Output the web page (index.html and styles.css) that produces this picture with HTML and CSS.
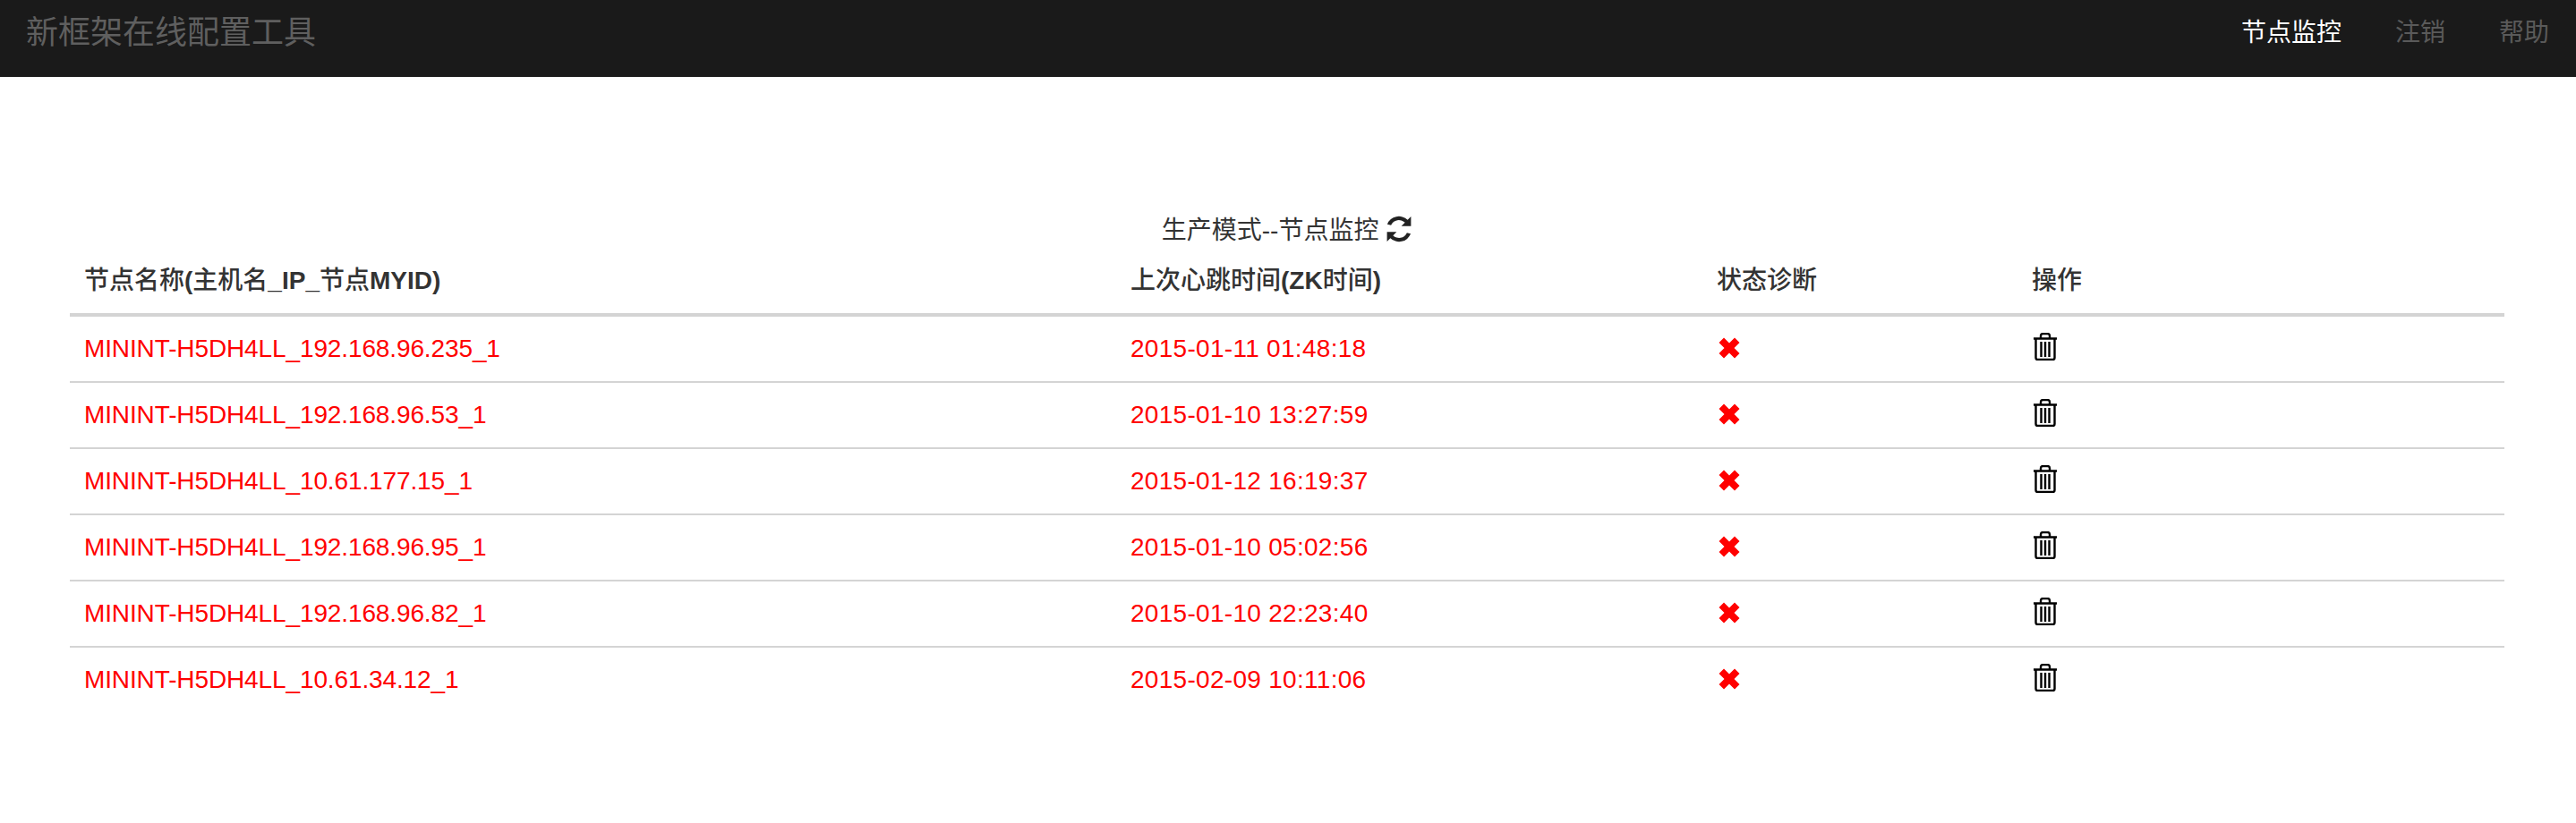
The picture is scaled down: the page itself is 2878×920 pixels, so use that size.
FILE: index.html
```html
<!DOCTYPE html>
<html lang="zh-CN">
<head>
  <meta charset="UTF-8">
  <meta name="viewport" content="width=device-width, initial-scale=1.0">
  <title>新框架在线配置工具</title>
  <link rel="stylesheet" href="styles.css">
</head>
<body>
  <svg class="sprites" width="0" height="0">
    <symbol id="icon-x" viewBox="0 0 24 24">
      <path d="M6 .5 12 6.500 18 .5 23.500 6 17.500 12 23.500 18 18 23.500 12 17.500 6 23.500 .5 18 6.500 12 .5 6Z"/>
    </symbol>
    <symbol id="icon-trash" viewBox="0 0 26 31">
      <path d="M0 6.500h26M8 6V3.500Q8 1 10.500 1h5Q18 1 18 3.500V6M2.500 7v21q0 2 2 2h17q2 0 2-2V7M8.500 10v17M13 10v17M17.500 10v17" fill="none" stroke="currentColor" stroke-width="2.400"/>
    </symbol>
    <symbol id="icon-refresh" viewBox="0 0 28 28">
      <path d="M23 4.500l3.500-3.500v10h-10l3.700-3.700A9 9 0 0 0 5.700 10L1.800 9A13 13 0 0 1 23 4.500ZM5 23.500 1.500 27V17h10l-3.700 3.700A9 9 0 0 0 22.300 18l3.900 1A13 13 0 0 1 5 23.500Z"/>
    </symbol>
  </svg>

  <nav class="navbar">
    <a class="brand" href="#">新框架在线配置工具</a>
    <ul class="nav-links">
      <li><a class="active" href="#">节点监控</a></li>
      <li><a href="#">注销</a></li>
      <li><a href="#">帮助</a></li>
    </ul>
  </nav>

  <main class="content">
    <table class="nodes">
      <caption>生产模式--节点监控 <svg class="icon-refresh"><use href="#icon-refresh"/></svg></caption>
      <colgroup>
        <col class="col-name">
        <col class="col-time">
        <col class="col-state">
        <col>
      </colgroup>
      <thead>
        <tr>
          <th>节点名称<b>(</b>主机名<b>_IP_</b>节点<b>MYID)</b></th>
          <th>上次心跳时间<b>(ZK</b>时间<b>)</b></th>
          <th>状态诊断</th>
          <th>操作</th>
        </tr>
      </thead>
      <tbody>
        <tr>
          <td class="name">MININT-H5DH4LL_192.168.96.235_1</td>
          <td class="time">2015-01-11 01:48:18</td>
          <td><svg class="icon-x"><use href="#icon-x"/></svg></td>
          <td><svg class="icon-trash"><use href="#icon-trash"/></svg></td>
        </tr>
        <tr>
          <td class="name">MININT-H5DH4LL_192.168.96.53_1</td>
          <td class="time">2015-01-10 13:27:59</td>
          <td><svg class="icon-x"><use href="#icon-x"/></svg></td>
          <td><svg class="icon-trash"><use href="#icon-trash"/></svg></td>
        </tr>
        <tr>
          <td class="name">MININT-H5DH4LL_10.61.177.15_1</td>
          <td class="time">2015-01-12 16:19:37</td>
          <td><svg class="icon-x"><use href="#icon-x"/></svg></td>
          <td><svg class="icon-trash"><use href="#icon-trash"/></svg></td>
        </tr>
        <tr>
          <td class="name">MININT-H5DH4LL_192.168.96.95_1</td>
          <td class="time">2015-01-10 05:02:56</td>
          <td><svg class="icon-x"><use href="#icon-x"/></svg></td>
          <td><svg class="icon-trash"><use href="#icon-trash"/></svg></td>
        </tr>
        <tr>
          <td class="name">MININT-H5DH4LL_192.168.96.82_1</td>
          <td class="time">2015-01-10 22:23:40</td>
          <td><svg class="icon-x"><use href="#icon-x"/></svg></td>
          <td><svg class="icon-trash"><use href="#icon-trash"/></svg></td>
        </tr>
        <tr>
          <td class="name">MININT-H5DH4LL_10.61.34.12_1</td>
          <td class="time">2015-02-09 10:11:06</td>
          <td><svg class="icon-x"><use href="#icon-x"/></svg></td>
          <td><svg class="icon-trash"><use href="#icon-trash"/></svg></td>
        </tr>
      </tbody>
    </table>
  </main>
</body>
</html>
```

FILE: styles.css
```css
html, body {
  margin: 0;
  padding: 0;
}
body {
  font-family: "Liberation Sans", "Noto Sans CJK SC", sans-serif;
  font-size: 28px;
  line-height: 40px;
  color: #333;
  background: #fff;
}
a {
  text-decoration: none;
}
.sprites {
  display: block;
  height: 0;
}
.navbar {
  display: flex;
  justify-content: space-between;
  height: 86px;
  padding: 0 30px 0 29px;
  background-color: #1a1a1a;
}
.brand {
  font-size: 36px;
  line-height: 40px;
  padding-top: 17px;
  color: #5f5f5f;
}
.nav-links {
  display: flex;
  gap: 60px;
  margin: 0;
  padding: 17px 0 0;
  list-style: none;
}
.nav-links a {
  color: #5a5a5a;
}
.nav-links a.active {
  color: #fff;
}
.content {
  padding: 152px 80px 0 78px;
}
.nodes {
  width: 100%;
  table-layout: fixed;
  border-collapse: collapse;
}
caption {
  line-height: 40px;
  padding-bottom: 8px;
}
.col-name {
  width: 1169px;
}
.col-time {
  width: 655px;
}
.col-state {
  width: 352px;
}
th, td {
  padding: 16px;
  text-align: left;
  vertical-align: top;
  line-height: 40px;
  height: 40px;
  border-bottom: 2px solid #d4d4d4;
}
th {
  padding: 8px 16px 16px;
  font-weight: 500;
  border-bottom: 4px solid #d4d4d4;
}
td {
  color: #f00;
}
td.name {
  letter-spacing: -0.12px;
}
td.time {
  letter-spacing: 0.29px;
}
tbody tr:last-child td {
  border-bottom: none;
}
.icon-x {
  display: block;
  width: 24px;
  height: 24px;
  margin: 7px 0 0 2px;
  fill: #f00;
}
.icon-trash {
  display: block;
  width: 26px;
  height: 31px;
  margin: 2px 0 0 2px;
  color: #000;
}
.icon-refresh {
  width: 30px;
  height: 30px;
  vertical-align: -4px;
  fill: #222;
}
```
